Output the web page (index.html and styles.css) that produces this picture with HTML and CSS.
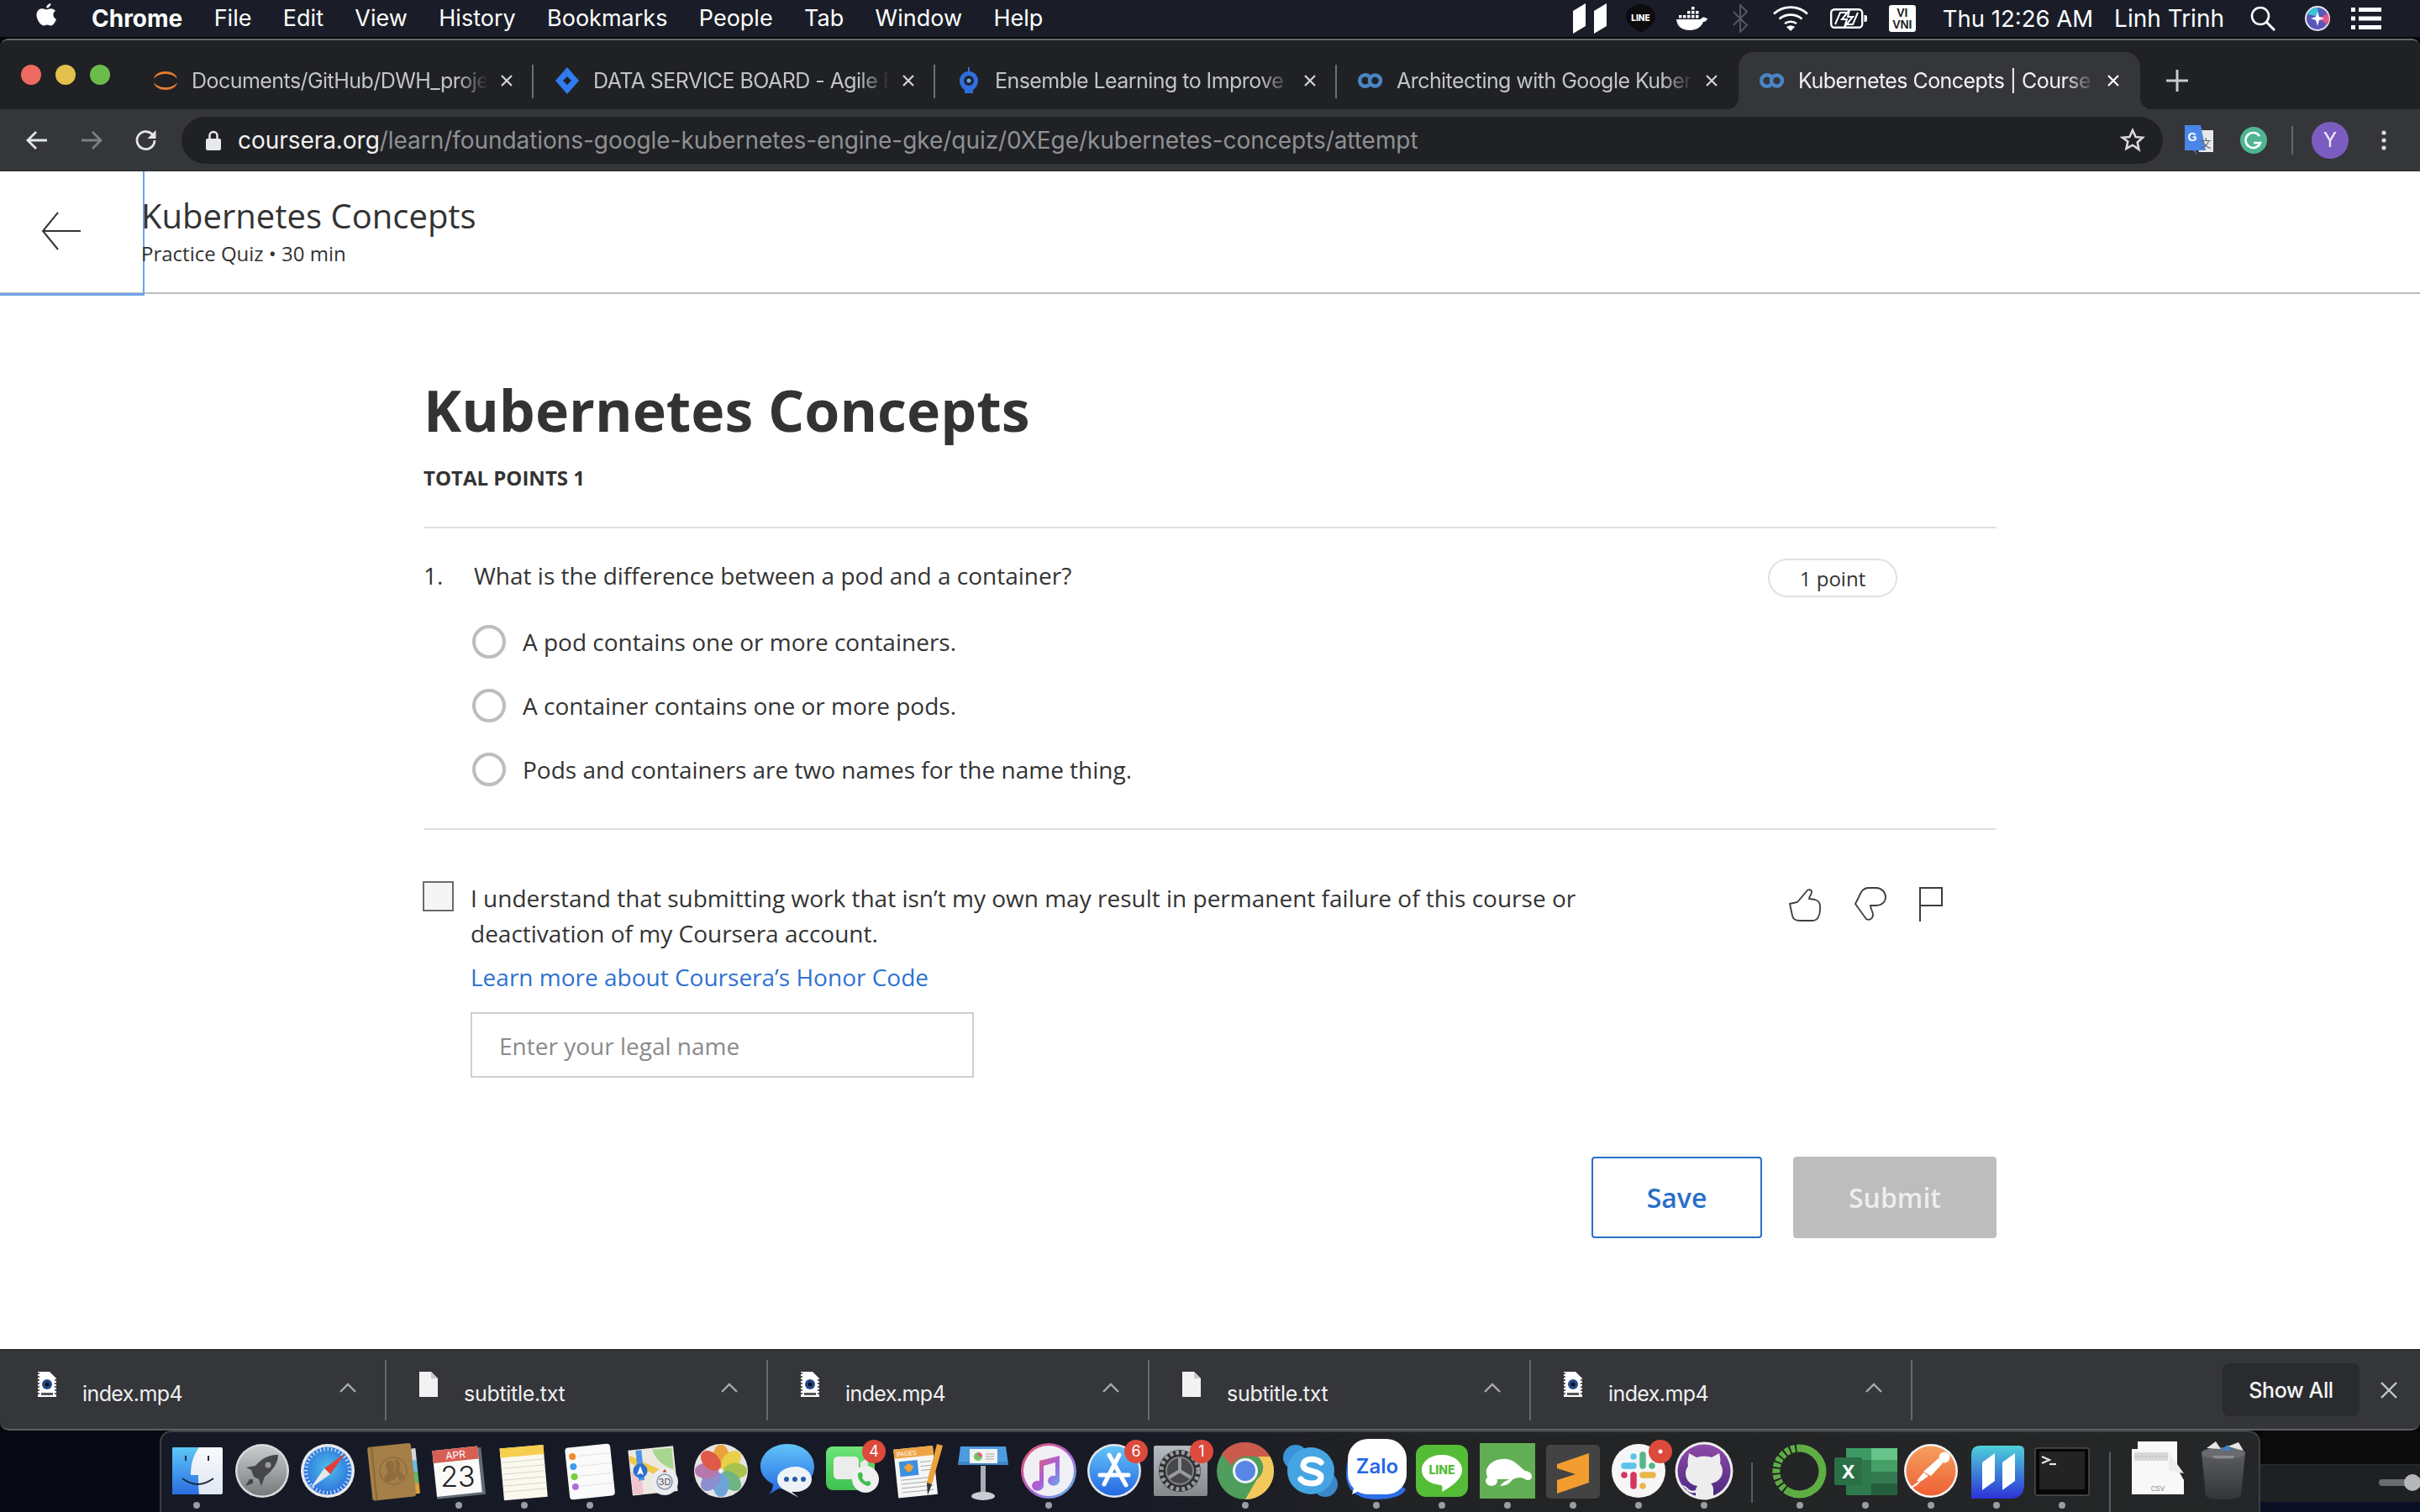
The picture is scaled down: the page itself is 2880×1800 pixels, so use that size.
FILE: index.html
```html
<!DOCTYPE html>
<html lang="en">
<head>
<meta charset="utf-8">
<title>Kubernetes Concepts | Coursera</title>
<link rel="stylesheet" href="styles.css">
</head>
<body>
<svg class="defs" width="0" height="0" aria-hidden="true">
  <defs>
    <linearGradient id="gFinder" x1="0" y1="0" x2="0" y2="1"><stop offset="0" stop-color="#5cc8f8"/><stop offset="1" stop-color="#2a6de0"/></linearGradient>
    <linearGradient id="gFinderR" x1="0" y1="0" x2="0" y2="1"><stop offset="0" stop-color="#f8f9fb"/><stop offset="1" stop-color="#dfe8f3"/></linearGradient>
    <linearGradient id="gGray" x1="0" y1="0" x2="0" y2="1"><stop offset="0" stop-color="#c9cbcd"/><stop offset="1" stop-color="#77797b"/></linearGradient>
    <radialGradient id="gSafari" cx="0.5" cy="0.45" r="0.6"><stop offset="0" stop-color="#4cc2ec"/><stop offset="1" stop-color="#2a66da"/></radialGradient>
    <linearGradient id="gBlue" x1="0" y1="0" x2="0" y2="1"><stop offset="0" stop-color="#62c4f9"/><stop offset="1" stop-color="#2467e4"/></linearGradient>
    <linearGradient id="gGreen" x1="0" y1="0" x2="0" y2="1"><stop offset="0" stop-color="#6ee47a"/><stop offset="1" stop-color="#3fc14f"/></linearGradient>
    <linearGradient id="gTunes" x1="0" y1="0" x2="1" y2="1"><stop offset="0" stop-color="#ef5a5a"/><stop offset="0.5" stop-color="#b65bd0"/><stop offset="1" stop-color="#4cc5f0"/></linearGradient>
    <linearGradient id="gNote" x1="0" y1="0" x2="1" y2="1"><stop offset="0" stop-color="#f05a6e"/><stop offset="0.55" stop-color="#a860d8"/><stop offset="1" stop-color="#59b8f2"/></linearGradient>
    <linearGradient id="gPost" x1="0" y1="0" x2="0" y2="1"><stop offset="0" stop-color="#f5a05e"/><stop offset="1" stop-color="#ee5f35"/></linearGradient>
    <linearGradient id="gPixel" x1="0" y1="0" x2="0" y2="1"><stop offset="0" stop-color="#4fd0d8"/><stop offset="1" stop-color="#2c33d8"/></linearGradient>
    <linearGradient id="gHub" x1="0" y1="0" x2="0" y2="1"><stop offset="0" stop-color="#8f4aa8"/><stop offset="1" stop-color="#4a2880"/></linearGradient>
    <linearGradient id="gTrash" x1="0" y1="0" x2="0" y2="1"><stop offset="0" stop-color="#5c5d60"/><stop offset="1" stop-color="#333436"/></linearGradient>
    <linearGradient id="gSys" x1="0" y1="0" x2="0" y2="1"><stop offset="0" stop-color="#b4bcc2"/><stop offset="1" stop-color="#85898c"/></linearGradient>
  </defs>
</svg>

<header class="menubar">
  <svg class="apple" viewBox="0 0 24 30"><path fill="#fff" d="M17 0c.2 2.400-2.300 5.800-5.200 5.600C11.500 3 14 .3 17 0zM12 7.400c1.300 0 2.900-1.200 5-1.200 1.500 0 4 .6 5.500 2.900-3.900 2.400-3.300 8 1 9.700-1 2.800-3.600 7.700-6.300 7.700-1.700 0-2.500-1.100-4.400-1.100-2 0-2.800 1.100-4.400 1.100C5 26.500 0 19.500 0 14.100 0 8.900 3.300 6.300 6.600 6.300c2.200 0 3.900 1.100 5.400 1.100z"/></svg>
  <nav class="menus">
    <span class="menu menu-app">Chrome</span>
    <span class="menu">File</span>
    <span class="menu">Edit</span>
    <span class="menu">View</span>
    <span class="menu">History</span>
    <span class="menu">Bookmarks</span>
    <span class="menu">People</span>
    <span class="menu">Tab</span>
    <span class="menu">Window</span>
    <span class="menu">Help</span>
  </nav>
  <div class="tray">
    <svg class="t-pixel" viewBox="0 0 40 36"><path fill="#fff" d="M0 9 15 0v27L0 36zM25 9 40 0v27l-15 9z"/></svg>
    <svg class="t-line" viewBox="0 0 35 36"><path fill="#0c0c0e" d="M17.500 1C27 1 35 8 35 16c0 8-9 15-17.500 19C12 30 0 27 0 16 0 8 8 1 17.500 1z"/><text class="tx-line" x="17.500" y="21" text-anchor="middle">LINE</text></svg>
    <svg class="t-docker" viewBox="0 0 37 30"><path fill="#fff" d="M0 16h29c1-2 3-3 5-2l3 1c-1 3-3 4-5 4-2 6-8 10-16 10C6 29 1 24 0 16z"/><path fill="#fff" d="M3 11h3.500v3.500H3zM8 11h3.500v3.500H8zM13 11h3.500v3.500H13zM18 11h3.500v3.500H18zM23 11h3.500v3.500H23zM13 6h3.500v3.500H13zM18 6h3.500v3.500H18zM23 6h3.500v3.500H23zM18 1h3.500v3.500H18z"/></svg>
    <svg class="t-bt" viewBox="0 0 18 34"><path fill="none" stroke="#53565e" stroke-width="2" d="M1 9 17 25 9 33V1l8 8L1 25"/></svg>
    <svg class="t-wifi" viewBox="0 0 42 30"><g fill="none" stroke="#fff" stroke-width="2.600"><path d="M1 9.500C12-1 30-1 41 9.500"/><path d="M7.500 15.500C15 9 27 9 34.500 15.500"/><path d="M14 21C18 18 24 18 28 21"/></g><path fill="#fff" d="M21 30l-5-5c3-2 7-2 10 0z"/></svg>
    <svg class="t-batt" viewBox="0 0 44 24"><rect x="1.200" y="1.200" width="37" height="21.600" rx="4" fill="none" stroke="#fff" stroke-width="2.400"/><path fill="#fff" d="M40.500 8h1.500q2 0 2 2v4q0 2-2 2h-1.500z"/><path fill="none" stroke="#fff" stroke-width="2" d="M6 19 12 5h8M33 5l-6 14h-8"/><path fill="none" stroke="#fff" stroke-width="2" d="M23 2 14 13h6l-3 9 10-12h-6z"/></svg>
    <div class="t-vni"><span>VI</span><span>VNI</span></div>
    <span class="tray-text t-time">Thu 12:26 AM</span>
    <span class="tray-text t-name">Linh Trinh</span>
    <svg class="t-search" viewBox="0 0 30 30"><circle cx="12" cy="12" r="10" fill="none" stroke="#fff" stroke-width="2.600"/><path stroke="#fff" stroke-width="3" d="M19 19l10 10"/></svg>
    <svg class="t-siri" viewBox="0 0 30 30"><circle cx="15" cy="15" r="15" fill="#e8e8ee"/><circle cx="15" cy="15" r="13" fill="#5a57b8"/><path fill="#3cc0d8" d="M3 10a13 13 0 0 1 12-8l2 11z"/><path fill="#e0568e" d="M27 9a13 13 0 0 1 0 13L16 15z"/><path fill="#fff" d="M15 7l2 6 6 2-6 2-2 7-2-7-6-2 6-2z"/></svg>
    <svg class="t-list" viewBox="0 0 36 26"><path fill="#fff" d="M0 0h5v5H0zM9 0h27v5H9zM0 10.500h5v5H0zM9 10.500h27v5H9zM0 21h5v5H0zM9 21h27v5H9z"/></svg>
  </div>
</header>

<div class="window">
  <div class="tabstrip">
    <div class="lights"><i class="light light-r"></i><i class="light light-y"></i><i class="light light-g"></i></div>
    <div class="tab">
      <svg class="fav" viewBox="0 0 32 32"><path fill="#e87b2c" d="M2 14C4 2 28 2 30 14 24 6 8 6 2 14zM2 18c2 12 26 12 28 0-6 8-22 8-28 0z"/></svg>
      <span class="tab-title">Documents/GitHub/DWH_proje</span>
      <svg class="tab-x" viewBox="0 0 14 14"><path stroke="#d5d6d8" stroke-width="2.200" d="M1 1l12 12M13 1 1 13"/></svg>
    </div>
    <div class="tab">
      <svg class="fav" viewBox="0 0 32 32"><path fill="#2f7cf0" d="M16 0 30 16 16 32 2 16zM16 11l-5 5 5 5 5-5z"/></svg>
      <span class="tab-title">DATA SERVICE BOARD - Agile B</span>
      <svg class="tab-x" viewBox="0 0 14 14"><path stroke="#d5d6d8" stroke-width="2.200" d="M1 1l12 12M13 1 1 13"/></svg>
    </div>
    <div class="tab">
      <svg class="fav" viewBox="0 0 32 32"><path fill="#2f6fe0" d="M15 0h2v6h-2zM16 5a11 11 0 0 1 11 11c0 5-3 9-6 11v4H11v-4C8 25 5 21 5 16A11 11 0 0 1 16 5z"/><circle cx="16" cy="16" r="6" fill="#20232a"/><circle cx="16" cy="16" r="2.500" fill="#6fa8f5"/></svg>
      <span class="tab-title">Ensemble Learning to Improve</span>
      <svg class="tab-x" viewBox="0 0 14 14"><path stroke="#d5d6d8" stroke-width="2.200" d="M1 1l12 12M13 1 1 13"/></svg>
    </div>
    <div class="tab">
      <svg class="fav" viewBox="0 0 32 32"><g fill="none" stroke="#4b84c4" stroke-width="4.500"><path d="M15 11.500A6.800 6.800 0 1 0 15 20.500"/><circle cx="21.500" cy="16" r="6.500"/></g></svg>
      <span class="tab-title">Architecting with Google Kuber</span>
      <svg class="tab-x" viewBox="0 0 14 14"><path stroke="#d5d6d8" stroke-width="2.200" d="M1 1l12 12M13 1 1 13"/></svg>
    </div>
    <div class="tab tab-active">
      <svg class="fav" viewBox="0 0 32 32"><g fill="none" stroke="#4b84c4" stroke-width="4.500"><path d="M15 11.500A6.800 6.800 0 1 0 15 20.500"/><circle cx="21.500" cy="16" r="6.500"/></g></svg>
      <span class="tab-title">Kubernetes Concepts | Course</span>
      <svg class="tab-x" viewBox="0 0 14 14"><path stroke="#ffffff" stroke-width="2.200" d="M1 1l12 12M13 1 1 13"/></svg>
    </div>
    <svg class="newtab" viewBox="0 0 26 26"><path fill="#c8cacd" d="M11.500 0h3v11.500H26v3H14.500V26h-3V14.500H0v-3h11.500z"/></svg>
  </div>

  <div class="toolbar">
    <button class="navbtn"><svg viewBox="0 0 28 28"><path fill="none" stroke="#e4e5e7" stroke-width="2.800" d="M26 14H3M13 4 3 14l10 10"/></svg></button>
    <button class="navbtn"><svg viewBox="0 0 28 28"><path fill="none" stroke="#7d7f83" stroke-width="2.800" d="M2 14h23M15 4l10 10-10 10"/></svg></button>
    <button class="navbtn"><svg viewBox="0 0 28 28"><path fill="none" stroke="#e4e5e7" stroke-width="2.800" d="M24 14a10.500 10.500 0 1 1-3.200-7.500L24 9.500"/><path fill="#e4e5e7" d="M25.500 2v10h-10z"/></svg></button>
    <div class="omnibox">
      <svg class="lock" viewBox="0 0 18 24"><path fill="none" stroke="#e8e9ea" stroke-width="2.500" d="M4.500 11V6.500a4.500 4.500 0 0 1 9 0V11"/><rect y="10" width="18" height="14" rx="2" fill="#e8e9ea"/></svg>
      <span class="url"><b class="url-host">coursera.org</b>/learn/foundations-google-kubernetes-engine-gke/quiz/0XEge/kubernetes-concepts/attempt</span>
      <svg class="star" viewBox="0 0 30 30"><path fill="none" stroke="#d8d9db" stroke-width="2.600" d="M15 3l3.600 8 8.400.8-6.300 5.700 1.800 8.500L15 20.700 7.500 25l1.800-8.500L3 11.800l8.400-.8z"/></svg>
    </div>
    <svg class="ext ext-tr" viewBox="0 0 34 36"><path fill="#e8e8e8" d="M12 6h22v26H17z"/><path fill="#4a86e8" d="M0 0h19l6 30H12l4 6-6-6H0z"/><text class="tx-g" x="9" y="19" text-anchor="middle">G</text><text class="tx-zh" x="25" y="26" text-anchor="middle">文</text></svg>
    <svg class="ext ext-g" viewBox="0 0 32 32"><circle cx="16" cy="16" r="16" fill="#4eb592"/><path fill="none" stroke="#fff" stroke-width="2.600" d="M23 11a9 9 0 1 0 1 8h-8"/></svg>
    <i class="tb-sep"></i>
    <span class="avatar">Y</span>
    <svg class="kebab" viewBox="0 0 6 24"><circle cx="3" cy="3" r="2.600" fill="#d8d9db"/><circle cx="3" cy="12" r="2.600" fill="#d8d9db"/><circle cx="3" cy="21" r="2.600" fill="#d8d9db"/></svg>
  </div>

  <div class="page">
    <div class="page-head">
      <a class="back"><svg viewBox="0 0 50 50"><path fill="none" stroke="#333" stroke-width="2" d="M48 25H3M21 3 3 25l18 22"/></svg></a>
      <div class="head-text">
        <div class="head-title">Kubernetes Concepts</div>
        <div class="head-sub">Practice Quiz • 30 min</div>
      </div>
    </div>
    <main class="quiz">
      <h1 class="quiz-title">Kubernetes Concepts</h1>
      <div class="total">TOTAL POINTS 1</div>
      <hr class="rule rule-a">
      <div class="question">
        <span class="qnum">1.</span>
        <span class="qtext">What is the difference between a pod and a container?</span>
        <span class="pill">1 point</span>
      </div>
      <div class="options">
        <label class="option"><i class="radio"></i><span>A pod contains one or more containers.</span></label>
        <label class="option"><i class="radio"></i><span>A container contains one or more pods.</span></label>
        <label class="option"><i class="radio"></i><span>Pods and containers are two names for the name thing.</span></label>
      </div>
      <hr class="rule rule-b">
      <div class="honor">
        <i class="check"></i>
        <div class="honor-body">
          <p class="honor-text">I understand that submitting work that isn’t my own may result in permanent failure of this course or deactivation of my Coursera account.</p>
          <a class="honor-link">Learn more about Coursera’s Honor Code</a>
          <div class="name-input">Enter your legal name</div>
        </div>
        <div class="feedback">
          <svg class="fb fb-up" viewBox="0 0 38 41"><path fill="none" stroke="#3a3d42" stroke-width="1.800" d="M1 20l9-2L21 5c2-3 6-2 6 1 0 3-3 5-3 8l7 1c4 1 6 4 6 8v4c0 7-3 13-9 13H13c-5 0-8-1-9-6z"/></svg>
          <svg class="fb fb-down" viewBox="0 0 38 41"><path fill="none" stroke="#3a3d42" stroke-width="1.800" d="M1 20 8 6c2-3 5-5 9-5h9c6 0 11 5 11 11s-5 10-11 10h-7c0 4 3 7 3 11 0 5-5 7-8 5l-3-4z"/></svg>
          <svg class="fb fb-flag" viewBox="0 0 28 41"><path fill="none" stroke="#3a3d42" stroke-width="2" d="M1 41V1h26v21H1"/></svg>
        </div>
      </div>
      <div class="actions">
        <button class="btn btn-save">Save</button>
        <button class="btn btn-submit">Submit</button>
      </div>
    </main>
  </div>

  <div class="shelf">
    <div class="dl">
      <svg class="dl-ico" viewBox="0 0 22 30"><path fill="#fff" d="M0 0h14l8 8v22H0z"/><path fill="none" stroke="#222" stroke-width="1.500" stroke-dasharray="2 2" d="M1 1v28M21 9v20"/><circle cx="11" cy="15" r="6" fill="#234a8a"/><circle cx="11" cy="15" r="2.500" fill="#111"/><rect x="4" y="25" width="14" height="3" fill="#555"/></svg>
      <span class="dl-name">index.mp4</span>
      <svg class="dl-chev" viewBox="0 0 20 12"><path fill="none" stroke="#a8a9ab" stroke-width="2.400" d="M1 11 10 2l9 9"/></svg>
    </div>
    <div class="dl">
      <svg class="dl-ico" viewBox="0 0 22 30"><path fill="#f2f2f2" d="M0 0h14l8 8v22H0z"/><path fill="#c9c9c9" d="M14 0l8 8h-8z"/></svg>
      <span class="dl-name dl-name-txt">subtitle.txt</span>
      <svg class="dl-chev" viewBox="0 0 20 12"><path fill="none" stroke="#a8a9ab" stroke-width="2.400" d="M1 11 10 2l9 9"/></svg>
    </div>
    <div class="dl">
      <svg class="dl-ico" viewBox="0 0 22 30"><path fill="#fff" d="M0 0h14l8 8v22H0z"/><path fill="none" stroke="#222" stroke-width="1.500" stroke-dasharray="2 2" d="M1 1v28M21 9v20"/><circle cx="11" cy="15" r="6" fill="#234a8a"/><circle cx="11" cy="15" r="2.500" fill="#111"/><rect x="4" y="25" width="14" height="3" fill="#555"/></svg>
      <span class="dl-name">index.mp4</span>
      <svg class="dl-chev" viewBox="0 0 20 12"><path fill="none" stroke="#a8a9ab" stroke-width="2.400" d="M1 11 10 2l9 9"/></svg>
    </div>
    <div class="dl">
      <svg class="dl-ico" viewBox="0 0 22 30"><path fill="#f2f2f2" d="M0 0h14l8 8v22H0z"/><path fill="#c9c9c9" d="M14 0l8 8h-8z"/></svg>
      <span class="dl-name dl-name-txt">subtitle.txt</span>
      <svg class="dl-chev" viewBox="0 0 20 12"><path fill="none" stroke="#a8a9ab" stroke-width="2.400" d="M1 11 10 2l9 9"/></svg>
    </div>
    <div class="dl">
      <svg class="dl-ico" viewBox="0 0 22 30"><path fill="#fff" d="M0 0h14l8 8v22H0z"/><path fill="none" stroke="#222" stroke-width="1.500" stroke-dasharray="2 2" d="M1 1v28M21 9v20"/><circle cx="11" cy="15" r="6" fill="#234a8a"/><circle cx="11" cy="15" r="2.500" fill="#111"/><rect x="4" y="25" width="14" height="3" fill="#555"/></svg>
      <span class="dl-name">index.mp4</span>
      <svg class="dl-chev" viewBox="0 0 20 12"><path fill="none" stroke="#a8a9ab" stroke-width="2.400" d="M1 11 10 2l9 9"/></svg>
    </div>
    <button class="showall">Show All</button>
    <svg class="shelf-x" viewBox="0 0 20 20"><path stroke="#c8c9cb" stroke-width="2.400" d="M1 1l18 18M19 1 1 19"/></svg>
  </div>
</div>

<div class="desktop">
  <div class="wall"></div>
  <div class="dock">
    <div class="di"><svg viewBox="0 0 78 84"><rect x="10" y="18" width="60" height="56" rx="2" fill="url(#gFinderR)"/><path fill="url(#gFinder)" d="M12 18h30c-6 8-10 18-10 33h9c0 8 0 15 1 23H12q-2 0-2-2V20q0-2 2-2z"/><path stroke="#1e2a40" stroke-width="2" d="M26 28v6M53 28v6"/><path fill="none" stroke="#1e2a40" stroke-width="2" d="M22 55q18 14 37 0"/></svg><i class="dot"></i></div>
    <div class="di"><svg viewBox="0 0 78 84"><circle cx="39" cy="46" r="32" fill="#d8dadc"/><circle cx="39" cy="46" r="29.500" fill="url(#gGray)"/><path fill="#45464a" d="M58 27c-10-1-21 5-27 13l-11 2 6 3 3 8 6 3 3 8 4-11c9-7 16-16 16-26zM28 56l-4 0-5 8 9-3z"/><circle cx="46" cy="39" r="3.500" fill="#9a9c9e"/></svg></div>
    <div class="di"><svg viewBox="0 0 78 84"><circle cx="39" cy="46" r="32" fill="#e8eaec"/><circle cx="39" cy="46" r="28.500" fill="url(#gSafari)"/><circle cx="39" cy="46" r="26" fill="none" stroke="#e6f2fc" stroke-width="4" stroke-dasharray="1.200 3.300"/><path fill="#e43f37" d="M60 25 35 43l7 7z"/><path fill="#e8e8e8" d="M18 67l24-17-7-7z"/></svg></div>
    <div class="di"><svg viewBox="0 0 78 84"><g transform="rotate(-6 39 46)"><rect x="62" y="22" width="6" height="16" fill="#d8d8d8"/><rect x="62" y="36" width="6" height="14" fill="#6cbde8"/><rect x="62" y="50" width="6" height="13" fill="#65b868"/><rect x="62" y="63" width="6" height="13" fill="#e0a03c"/><rect x="11" y="15" width="52" height="64" rx="3" fill="#a57f48"/><rect x="15" y="15" width="2" height="64" fill="#8a683a"/><circle cx="39" cy="46" r="16" fill="none" stroke="#8f6d3e" stroke-width="1.500"/><path fill="#8f6d3e" d="M27 58c0-8 4-9 6-11-4-6-2-14 3-14s7 8 3 14c2 2 4 3 5 5-3 4-10 7-17 6zM42 33c5-1 8 7 4 14 2 2 5 3 5 8-2 2-4 3-6 3-1-5-2-8-5-11 3-5 3-10 2-14z"/></g></svg></div>
    <div class="di"><svg viewBox="0 0 78 84"><g transform="rotate(-6 39 46)"><rect x="10" y="21" width="58" height="56" fill="#626c75"/><rect x="10" y="19" width="54" height="55" fill="#fafafa"/><rect x="10" y="19" width="54" height="15" fill="#d85f56"/><text class="tx-apr" x="37" y="31" text-anchor="middle">APR</text></g><text class="tx-23" x="38" y="65" text-anchor="middle">23</text></svg><i class="dot"></i></div>
    <div class="di"><svg viewBox="0 0 78 84"><g transform="rotate(-5 39 46)"><rect x="12" y="17" width="52" height="62" fill="#fbf8ee"/><rect x="12" y="17" width="52" height="11" fill="#f6cf4e"/><path stroke="#d7d5cd" stroke-width="1" d="M12 34h52M12 41h52M12 48h52M12 55h52M12 62h52M12 69h52"/></g></svg><i class="dot"></i></div>
    <div class="di"><svg viewBox="0 0 78 84"><g transform="rotate(-6 39 46)"><rect x="12" y="16" width="54" height="62" rx="4" fill="#fafafa"/><path stroke="#e2e2e2" stroke-width="1" d="M26 27h40M26 39h40M26 51h40M26 63h40"/><circle cx="20" cy="27" r="4" fill="#f08a2c"/><circle cx="20" cy="39" r="4" fill="#3d9cf0"/><circle cx="20" cy="51" r="4" fill="#76cd3c"/><circle cx="20" cy="63" r="4" fill="#b36cdc"/></g></svg><i class="dot"></i></div>
    <div class="di"><svg viewBox="0 0 78 84"><g transform="rotate(-6 35 46)"><rect x="9" y="19" width="54" height="54" fill="#eee9e0"/><path fill="#a8d690" d="M38 21h23v26C52 44 40 34 38 21z"/><path fill="#f0c84a" d="M10 34l44 26v-9L10 25z"/><path fill="#f2c4d0" d="M10 45h12v27H10z"/><path fill="#4e92e8" d="M18 20h7v36h-7z"/></g><circle cx="21" cy="46" r="8.500" fill="#2a70d0"/><path fill="#fff" d="M21 40l4 11-4-2-4 2z"/><circle cx="50" cy="59" r="16" fill="#e9edf0"/><circle cx="50" cy="59" r="9" fill="none" stroke="#8a96a8" stroke-width="1.500"/><text class="tx-3d" x="50" y="63" text-anchor="middle">3D</text><path fill="#d8352a" d="M50 44l2.500 3.500h-5z"/></svg></div>
    <div class="di"><svg viewBox="0 0 78 84"><circle cx="39" cy="46" r="32" fill="#e4e4e2"/><g class="petals"><ellipse cx="39" cy="29" rx="9.500" ry="14" fill="#eba33a"/><ellipse cx="39" cy="29" rx="9.500" ry="14" fill="#e9d04a" transform="rotate(45 39 46)"/><ellipse cx="39" cy="29" rx="9.500" ry="14" fill="#a9c34e" transform="rotate(90 39 46)"/><ellipse cx="39" cy="29" rx="9.500" ry="14" fill="#6eb583" transform="rotate(135 39 46)"/><ellipse cx="39" cy="29" rx="9.500" ry="14" fill="#6ca6d8" transform="rotate(180 39 46)"/><ellipse cx="39" cy="29" rx="9.500" ry="14" fill="#8a8fd0" transform="rotate(225 39 46)"/><ellipse cx="39" cy="29" rx="9.500" ry="14" fill="#b678ae" transform="rotate(270 39 46)"/><ellipse cx="39" cy="29" rx="9.500" ry="14" fill="#df5a48" transform="rotate(315 39 46)"/></g><circle cx="39" cy="46" r="1.500" fill="#fff"/></svg></div>
    <div class="di"><svg viewBox="0 0 78 84"><path fill="url(#gBlue)" d="M40 14c17 0 32 11 32 27s-15 27-32 27c-3 0-7 0-10-1l-12 7c3-3 5-8 5-12C14 57 8 50 8 41c0-16 15-27 32-27z"/><path fill="#eef3f8" d="M50 41c11 0 19 7 19 15s-8 15-19 15c-2 0-4 0-5 0l9 7-15-8c-7-3-11-8-11-14 0-8 9-15 22-15z"/><circle cx="39" cy="56" r="3" fill="#2a5ca8"/><circle cx="49" cy="56" r="3" fill="#2a5ca8"/><circle cx="59" cy="56" r="3" fill="#2a5ca8"/></svg></div>
    <div class="di"><svg viewBox="0 0 78 84"><rect x="8" y="17" width="58" height="52" rx="8" fill="url(#gGreen)"/><rect x="17" y="29" width="30" height="27" rx="5" fill="#ececec"/><path fill="#e8e8e8" d="M49 36l9-6v26l-9-6z"/><circle cx="55" cy="56" r="16" fill="#f0f0f0"/><path fill="#3fbf50" d="M48 48c2-1 3 0 4 3 0 2-1 2-1 3 1 2 2 4 5 5 1 0 1-1 3-1 2 1 3 3 2 4-2 3-5 2-8 0-4-2-8-8-7-12 0-1 1-2 2-2z"/><circle cx="65" cy="23" r="14" fill="#dc4a3b"/><text class="tx-badge" x="65" y="29" text-anchor="middle">4</text></svg></div>
    <div class="di"><svg viewBox="0 0 78 84"><g transform="rotate(-6 39 46)"><rect x="13" y="18" width="47" height="58" fill="#f6f6f6"/><rect x="13" y="18" width="47" height="11" fill="#eda445"/><text class="tx-pages" x="16" y="27">PAGES</text><rect x="18" y="33" width="22" height="18" fill="#3b8fe0"/><path fill="#eea23a" d="M29 36l6 4-4 6h-4l-4-6z"/><path stroke="#a8a8a8" stroke-width="1" d="M43 36h13M43 41h13M43 46h13M18 55h38M18 60h38M18 65h38M18 70h38"/></g><path fill="#eea23a" d="M62 14l7 2-13 46-6-2z"/><path fill="#333" d="M50 60l6 2-5 13z"/></svg></div>
    <div class="di"><svg viewBox="0 0 78 84"><rect x="36" y="40" width="6" height="34" fill="#a8aeb4"/><ellipse cx="39" cy="76" rx="14" ry="5" fill="#c8ced4"/><path fill="#4e9ce0" d="M12 17h54l3 22H9z"/><rect x="10" y="35" width="58" height="4" fill="#3f86cc"/><rect x="23" y="20" width="33" height="17" fill="#f2f2f2"/><circle cx="33" cy="29" r="5" fill="#74c06e"/><path fill="#e05a8a" d="M33 29v-5a5 5 0 0 1 5 5z"/><path stroke="#a8a8a8" stroke-width="1" d="M42 26h10M42 29h10M42 32h10"/></svg></div>
    <div class="di"><svg viewBox="0 0 78 84"><circle cx="39" cy="46" r="33" fill="url(#gTunes)"/><circle cx="39" cy="46" r="30" fill="#f0f0f4"/><path fill="url(#gNote)" d="M28 34l24-6v30a7 6 0 1 1-5-6V36l-14 4v24a7 6 0 1 1-5-6z"/></svg><i class="dot"></i></div>
    <div class="di"><svg viewBox="0 0 78 84"><circle cx="39" cy="46" r="32" fill="#e4e6e8"/><circle cx="39" cy="46" r="29.500" fill="url(#gBlue)"/><g stroke="#fff" stroke-width="5" stroke-linecap="round" fill="none"><path d="M33 27l20 36M45 27 27 62M22 51h34"/></g><circle cx="65" cy="23" r="14" fill="#dc4a3b"/><text class="tx-badge" x="65" y="29" text-anchor="middle">6</text></svg></div>
    <div class="di"><svg viewBox="0 0 78 84"><rect x="8" y="16" width="64" height="60" rx="2" fill="url(#gSys)"/><circle cx="39" cy="46" r="25" fill="#2f3033"/><circle cx="39" cy="46" r="22" fill="none" stroke="#9a9b9d" stroke-width="5" stroke-dasharray="4 3"/><circle cx="39" cy="46" r="16" fill="#47484b" stroke="#7f8082" stroke-width="2"/><g stroke="#9a9b9d" stroke-width="4"><path d="M39 46V31M39 46l13 8M39 46l-13 8"/></g><circle cx="65" cy="23" r="14" fill="#dc4a3b"/><text class="tx-badge" x="65" y="29" text-anchor="middle">1</text></svg></div>
    <div class="di"><svg viewBox="0 0 78 84"><circle cx="39" cy="46" r="34" fill="#4f9e5e"/><path fill="#cb5a4c" d="M39 12a34 34 0 0 1 29.500 17H39a17 17 0 0 0-16 11L11 26a34 34 0 0 1 28-14z"/><path fill="#f3c95c" d="M68.500 29A34 34 0 0 1 39 80l14-24a17 17 0 0 0 1-27z"/><circle cx="39" cy="46" r="15" fill="#f2f2f2"/><circle cx="39" cy="46" r="12" fill="#5886e4"/></svg><i class="dot"></i></div>
    <div class="di"><svg viewBox="0 0 78 84"><circle cx="21" cy="30" r="15" fill="#3a93d8"/><circle cx="56" cy="62" r="15" fill="#3a88c8"/><circle cx="39" cy="46" r="28" fill="#45a5e2"/><path fill="none" stroke="#fff" stroke-width="7" stroke-linecap="round" d="M51 36c-3-4-20-7-21 3-1 9 22 6 21 15-1 10-19 8-24 2"/></svg></div>
    <div class="di"><svg viewBox="0 0 78 84"><path fill="#2c6ce6" d="M16 20Q3 24 3 50c0 18 12 30 36 30 20 0 32-5 35-12z"/><rect x="5" y="8" width="70" height="66" rx="24" fill="#fff"/><path fill="#fff" d="M14 60l-4 14 14-7z"/><text class="tx-zalo" x="40" y="49" text-anchor="middle">Zalo</text></svg><i class="dot"></i></div>
    <div class="di"><svg viewBox="0 0 78 84"><rect x="8" y="15" width="62" height="62" rx="12" fill="#55bc36"/><path fill="#fff" d="M39 27c14 0 24 8 24 18 0 12-15 21-24 26 1-4 1-7-1-8C25 62 15 55 15 45c0-10 10-18 24-18z"/><text class="tx-linei" x="39" y="50" text-anchor="middle">LINE</text></svg><i class="dot"></i></div>
    <div class="di"><svg viewBox="0 0 78 84"><rect x="6" y="13" width="66" height="66" fill="#62ae54"/><path fill="#fff" d="M14 45c3-10 14-14 24-13 10 1 16 10 22 14 4 0 8 3 8 7s-5 5-8 3c-5-3-10-2-14 0H18c-3 0-5-8-4-11z"/><ellipse cx="20" cy="58" rx="7" ry="6" fill="#fff"/><path fill="#fff" d="M30 64c5-6 10-8 16-9-3 5-8 9-16 9z"/></svg><i class="dot"></i></div>
    <div class="di"><svg viewBox="0 0 78 84"><rect x="7" y="15" width="64" height="64" rx="5" fill="#434343"/><path fill="#f39c30" d="M58 25v20L20 57l38-12v15L20 73V57l22-7-22-7V38z"/></svg><i class="dot"></i></div>
    <div class="di"><svg viewBox="0 0 78 84"><circle cx="39" cy="46" r="32" fill="#f6f6f6"/><g stroke-width="7.500" stroke-linecap="round"><path stroke="#5cc3ee" d="M22 40h11"/><path stroke="#5cc3ee" d="M33 29v0"/><path stroke="#56b68a" d="M44 27v13"/><path stroke="#56b68a" d="M55 40v0"/><path stroke="#e9b84a" d="M44 51h12"/><path stroke="#e9b84a" d="M44 64v0"/><path stroke="#d4375c" d="M33 51v13"/><path stroke="#d4375c" d="M22 51v0"/></g><circle cx="65" cy="23" r="14" fill="#dc4a3b"/><circle cx="65" cy="23" r="2.500" fill="#fff"/></svg><i class="dot"></i></div>
    <div class="di"><svg viewBox="0 0 78 84"><circle cx="39" cy="46" r="34.500" fill="#ededed"/><circle cx="39" cy="46" r="31.500" fill="url(#gHub)"/><path fill="#ededed" d="M21 25l9 5c6-2 12-2 18 0l9-5c1 4 2 8 1 12 2 3 3 6 3 9 0 9-7 14-14 15 2 2 3 4 3 7v10H29v-6c-5 1-10-1-12-5l-5-4c4 0 7 3 9 5 2 2 5 2 8 1 0-2 1-3 2-5-7-1-14-6-14-15 0-3 1-6 3-9-1-4 0-8 1-15z"/></svg><i class="dot"></i></div>
    <i class="dock-sep"></i>
    <div class="di"><svg viewBox="0 0 78 84"><path fill="none" stroke="#5fae44" stroke-width="9" d="M40 19a27.500 27.500 0 1 1-14 52"/><path fill="none" stroke="#5fae44" stroke-width="9" stroke-dasharray="5 2" d="M26 71A27.500 27.500 0 0 1 40 19"/></svg><i class="dot"></i></div>
    <div class="di"><svg viewBox="0 0 78 84"><rect x="16" y="19" width="61" height="56" rx="2" fill="#2f7a4c"/><rect x="46" y="19" width="31" height="14" fill="#65c58a"/><rect x="46" y="33" width="31" height="14" fill="#45a067"/><rect x="46" y="47" width="31" height="14" fill="#357a50"/><rect x="46" y="61" width="31" height="14" fill="#265f3d"/><rect x="16" y="19" width="30" height="14" fill="#3e9a64"/><rect x="2" y="30" width="33" height="33" rx="2" fill="#2a6f45"/><text class="tx-x" x="18.500" y="55" text-anchor="middle">X</text></svg><i class="dot"></i></div>
    <div class="di"><svg viewBox="0 0 78 84"><circle cx="39" cy="46" r="32" fill="#f4f4f4"/><circle cx="39" cy="46" r="29.500" fill="url(#gPost)"/><g fill="#fff"><circle cx="55" cy="30" r="6.500"/><path d="M48 31l5 6-14 15-9-5z"/><path d="M30 48l6 4-8 6-6 0z"/><path d="M27 58c-4 5-8 8-14 9l16-12z"/></g></svg><i class="dot"></i></div>
    <div class="di"><svg viewBox="0 0 78 84"><path fill="url(#gPixel)" d="M20 16h46q6 0 6 6v40q0 17-17 17H9V27q0-11 11-11z"/><path fill="#fff" d="M22 36l15-11v33l-15 11zM46 36l15-11v33l-15 11z"/></svg><i class="dot"></i></div>
    <div class="di"><svg viewBox="0 0 78 84"><rect x="7" y="19" width="64" height="56" rx="2" fill="#060606" stroke="#6a6a6a" stroke-width="1"/><rect x="12" y="23" width="54" height="45" fill="#232323"/><path fill="none" stroke="#e6e6e6" stroke-width="2.200" d="M15 29l9 4-9 4"/><path stroke="#e6e6e6" stroke-width="2.200" d="M24 38h8"/></svg><i class="dot"></i></div>
    <i class="dock-sep dock-sep-b"></i>
    <div class="di"><svg viewBox="0 0 78 84"><path fill="#f8f8f8" d="M15 11h47v32l8 14v17H8V20h7z"/><path fill="#d8d8d8" d="M11 24h40v10H11z"/><path stroke="#c4c4c4" stroke-width="2" stroke-dasharray="2 2" d="M12 29h38"/><path fill="#ececec" d="M52 24l18 25-18-3z"/><text class="tx-csv" x="39" y="70" text-anchor="middle">CSV</text></svg></div>
    <div class="di"><svg viewBox="0 0 78 84"><path fill="url(#gTrash)" d="M13 25h52l-5 50q-1 5-21 5t-21-5z"/><ellipse cx="39" cy="25" rx="26" ry="7" fill="#6a6b6e"/><path fill="#e6e6e6" d="M19 19l11-8 6 9zM44 17l13-5 6 10z"/><path fill="#3e7fd0" d="M36 21l8-6 5 7z"/><path fill="#8b8d90" d="M26 28h26l-1 3H28z"/></svg></div>
  </div>
  <div class="side">
    <div class="side-top"></div>
    <div class="side-panel"><i class="slider"><b></b></i></div>
    <div class="side-wall"></div>
  </div>
</div>
</body>
</html>
```

FILE: styles.css
```css
* { box-sizing: border-box; }
html, body { margin: 0; padding: 0; }
body {
  width: 2880px;
  height: 1800px;
  overflow: hidden;
  background: #05070d;
  display: flex;
  flex-direction: column;
  font-family: "Open Sans", "Liberation Sans", sans-serif;
}
.defs { position: absolute; }
p, h1 { margin: 0; }
button { font: inherit; border: 0; background: none; padding: 0; }
svg { display: block; flex: none; }

/* menu bar */
.menubar {
  height: 44px;
  flex: none;
  background: #1a1d28;
  color: #fff;
  display: flex;
  align-items: center;
  padding: 0 46px 0 43px;
  font-family: Inter, "Liberation Sans", sans-serif;
}
.apple { width: 25px; height: 30px; margin-top: -6px; }
.menus { display: flex; gap: 37.400px; margin-left: 41px; font-size: 27px; }
.menu-app { font-weight: 700; font-size: 28px; }
.tray { margin-left: auto; display: flex; align-items: center; }
.t-pixel { width: 40px; height: 36px; }
.t-line { width: 35px; height: 36px; margin-left: 23px; }
.t-docker { width: 37px; height: 30px; margin-left: 25px; }
.t-bt { width: 18px; height: 34px; margin-left: 30px; }
.t-wifi { width: 42px; height: 30px; margin-left: 30px; }
.t-batt { width: 44px; height: 24px; margin-left: 26px; }
.t-vni {
  width: 32px; height: 32px; margin-left: 26px; background: #fff; border-radius: 3px;
  color: #1a1d28; font: 700 14px/14px "Liberation Sans", sans-serif;
  display: flex; flex-direction: column; align-items: center; justify-content: center;
}
.tray-text { font-size: 28px; white-space: nowrap; }
.t-time { margin-left: 32px; font-size: 27.500px; }
.t-name { margin-left: 25px; }
.t-search { width: 30px; height: 30px; margin-left: 31px; }
.t-siri { width: 30px; height: 30px; margin-left: 35px; }
.t-list { width: 36px; height: 26px; margin-left: 25px; }
.tx-line { font: 800 10px Inter, sans-serif; fill: #fff; }

/* window */
.window {
  margin-top: 2px;
  height: 1657px;
  flex: none;
  display: flex;
  flex-direction: column;
  background: #202124;
  border-top: 2px solid #67686b;
  border-radius: 10px;
  overflow: hidden;
  position: relative;
}
.tabstrip { height: 82px; flex: none; display: flex; align-items: flex-end; background: #202124; }
.lights { width: 157px; height: 68px; display: flex; gap: 17px; padding: 15px 0 0 25px; }
.light { width: 24px; height: 24px; border-radius: 50%; }
.light-r { background: #ee6a5f; }
.light-y { background: #e3c04c; }
.light-g { background: #6cbc4c; }
.tab {
  width: 478px;
  height: 68px;
  display: flex;
  align-items: center;
  padding: 0 25px 0 24px;
  position: relative;
  color: #c2c4c8;
  font: 400 25px Inter, "Liberation Sans", sans-serif;
  letter-spacing: -.55px;
}
.tab::after {
  content: "";
  position: absolute;
  right: 0;
  top: 15px;
  width: 2px;
  height: 40px;
  background: #6f7074;
}
.tab:nth-child(5)::after { display: none; }
.fav { width: 32px; height: 32px; }
.tab-title {
  margin: 0 8px 0 15px;
  flex: 1;
  min-width: 0;
  overflow: hidden;
  white-space: nowrap;
  -webkit-mask-image: linear-gradient(to right, #000 88%, transparent 98%);
  mask-image: linear-gradient(to right, #000 88%, transparent 98%);
}
.tab-x { width: 14px; height: 16px; }
.tab-active { background: #35363a; color: #f2f2f3; border-radius: 18px 18px 0 0; }
.tab-active::before, .tab-active::after {
  content: "";
  display: block;
  position: absolute;
  top: auto;
  bottom: 0;
  width: 14px;
  height: 14px;
  background: radial-gradient(circle at 0 0, transparent 14px, #35363a 14.500px);
}
.tab-active::before { left: -14px; }
.tab-active::after { right: -14px; background: radial-gradient(circle at 100% 0, transparent 14px, #35363a 14.500px); }
.newtab { width: 26px; height: 26px; margin: 0 0 21px 31px; }

.toolbar {
  height: 74px;
  flex: none;
  background: #35363a;
  display: flex;
  align-items: center;
  padding-left: 11px;
  border-bottom: 1px solid #2b2c2f;
}
.navbtn { width: 65px; height: 56px; display: flex; align-items: center; justify-content: center; }
.navbtn svg { width: 28px; height: 28px; }
.omnibox {
  margin-left: 10px;
  width: 2358px;
  height: 56px;
  border-radius: 28px;
  background: #202124;
  display: flex;
  align-items: center;
  padding: 0 21px 0 29px;
}
.lock { width: 18px; height: 24px; }
.url {
  margin-left: 20px;
  color: #8f9195;
  font: 400 28px Inter, "Liberation Sans", sans-serif;
  letter-spacing: -.05px;
  white-space: nowrap;
}
.url-host { color: #f1f2f3; font-weight: 400; }
.star { width: 30px; height: 30px; margin-left: auto; }
.ext-tr { width: 34px; height: 36px; margin-left: 26px; }
.ext-g { width: 32px; height: 32px; margin-left: 32px; }
.tx-g { font: 700 14px "Liberation Sans", sans-serif; fill: #fff; }
.tx-zh { font: 400 13px "Noto Sans CJK SC", sans-serif; fill: #666; }
.tb-sep { width: 2px; height: 34px; background: #66676b; margin-left: 29px; }
.avatar {
  width: 44px; height: 44px; margin-left: 22px; border-radius: 50%;
  background: #7b5cc0; color: #f0eaf8;
  display: flex; align-items: center; justify-content: center;
  font: 400 24px Inter, sans-serif;
}
.kebab { width: 6px; height: 24px; margin-left: 39px; }

/* page */
.page { flex: 1; min-height: 0; background: #fff; color: #333; }
.page-head {
  height: 146px;
  border-bottom: 2px solid #bdbdbd;
  display: flex;
  position: relative;
}
.back {
  width: 172px;
  height: 148px;
  flex: none;
  border-right: 2px solid #6fa3e8;
  border-bottom: 3px solid #6fa3e8;
  display: flex;
  align-items: center;
  justify-content: center;
  padding: 0 24px 4px 0;
}
.back svg { width: 50px; height: 50px; }
.head-text { margin-left: -4px; padding-top: 26px; }
.head-title { font-size: 40px; line-height: 54px; }
.head-sub { font-size: 24px; line-height: 32px; margin-top: 2px; }

.quiz { width: 1872px; margin-left: 504px; padding-top: 93px; font-size: 28px; }
.quiz-title { font-size: 68px; line-height: 90px; font-weight: 700; }
.total { font-size: 24px; line-height: 30px; font-weight: 700; margin-top: 21px; }
.rule { border: 0; height: 2px; background: #e1e1e1; margin: 0; }
.rule-a { margin-top: 43px; }
.question { display: flex; align-items: flex-start; margin-top: 36px; line-height: 40px; }
.qnum { width: 60px; }
.qtext { flex: 1; }
.pill {
  width: 154px; height: 46px; margin-right: 118px; border: 2px solid #e1e1e1; border-radius: 23px;
  font-size: 24px; line-height: 44px; text-align: center;
}
.options { display: flex; flex-direction: column; gap: 36px; margin-top: 33px; }
.option { display: flex; align-items: center; height: 40px; padding-left: 58px; line-height: 40px; }
.radio { width: 40px; height: 40px; border: 4px solid #bdbdbd; border-radius: 50%; margin-right: 20px; }
.rule-b { margin-top: 50px; }
.honor { display: flex; align-items: flex-start; margin-top: 60px; }
.check { width: 37px; height: 36px; border: 2px solid #6b6b6b; background: #f5f5f5; margin: 1px 20px 0 -1px; flex: none; }
.honor-body { flex: 1; }
.honor-text { width: 1340px; line-height: 42px; }
.honor-link { display: block; margin-top: 10px; line-height: 42px; color: #2f72d0; }
.name-input {
  margin-top: 21px; width: 599px; height: 78px; border: 2px solid #d0d0d0;
  padding-left: 32px; line-height: 76px; color: #8a8a8a;
}
.feedback { display: flex; margin: 8px 64px 0 0; }
.fb { height: 41px; }
.fb-up { width: 38px; }
.fb-down { width: 38px; margin-left: 40px; }
.fb-flag { width: 28px; margin-left: 39px; }
.actions { display: flex; justify-content: flex-end; gap: 37px; margin-top: 94px; }
.btn { height: 97px; border-radius: 4px; font-size: 32px; font-weight: 600; font-family: "Open Sans", sans-serif; }
.btn-save { width: 203px; border: 2px solid #2a6fc9; color: #2a6fc9; background: #fff; }
.btn-submit { width: 242px; background: #bdbdbd; color: #eeeeee; }

/* downloads */
.shelf {
  height: 97px;
  flex: none;
  background: #35363a;
  border-top: 2px solid #2a2b2e;
  border-bottom: 2px solid #5e5f62;
  border-radius: 0 0 10px 10px;
  display: flex;
  align-items: center;
  padding: 0 27px 0 6px;
  color: #f0f0f1;
  font: 400 25px Inter, "Liberation Sans", sans-serif;
}
.dl {
  width: 454px;
  height: 72px;
  display: flex;
  align-items: center;
  padding: 0 0 0 39px;
  border-right: 2px solid #66676b;
  position: relative;
}
.dl-ico { width: 22px; height: 30px; margin-top: -14px; }
.dl-name { margin-left: 31px; flex: 1; letter-spacing: -.6px; margin-top: 8px; }
.dl-name-txt { letter-spacing: -.3px; }
.dl-chev { width: 20px; height: 12px; margin-right: 34px; margin-top: -6px; }
.showall {
  margin-left: auto;
  width: 163px;
  height: 63px;
  border-radius: 8px;
  background: #2a2b2e;
  color: #f4f4f5;
  font: 500 25px Inter, sans-serif;
  letter-spacing: -.4px;
}
.shelf-x { width: 20px; height: 20px; margin-left: 25px; }

/* desktop + dock */
.desktop { height: 97px; flex: none; display: flex; }
.wall { width: 190px; background: #060912; flex: none; }
.dock {
  width: 2500px;
  flex: none;
  display: flex;
  padding-left: 3px;
  border: 2px solid #3d3f45;
  border-bottom: 0;
  border-radius: 14px 14px 0 0;
  background: linear-gradient(to right, #161a26 0%, #171a25 45%, #222325 60%, #252627 100%);
}
.di { width: 78px; height: 95px; flex: none; position: relative; margin-top: -2px; }
.di svg { width: 78px; height: 84px; overflow: visible; margin-top: 2px; }
.dot {
  position: absolute; left: 35px; top: 85px;
  width: 8px; height: 8px; border-radius: 50%; background: #9a9da3;
}
.dock-sep { width: 36px; flex: none; position: relative; }
.dock-sep::before { content: ""; position: absolute; left: 17px; top: 36px; width: 2px; height: 48px; background: #5b5c60; }
.dock-sep-b::before { top: 24px; height: 72px; }
.side { flex: 1; display: flex; flex-direction: column; }
.side-top { height: 40px; background: #0b0b0c; }
.side-panel { height: 45px; background: #1f2022; border-top: 1px solid #2c2d30; position: relative; }
.slider { position: absolute; left: 141px; top: 17px; width: 50px; height: 8px; background: #6a6b6d; border-radius: 4px; }
.slider b { position: absolute; right: 0; top: -6px; width: 20px; height: 20px; border-radius: 50%; background: #b6b7b9; }
.side-wall { flex: 1; background: #0a0f24; }

.tx-apr { font: 400 12px Inter, sans-serif; fill: #fff; }
.tx-23 { font: 300 34px Inter, sans-serif; fill: #222; }
.tx-3d { font: 400 11px Inter, sans-serif; fill: #555; }
.tx-badge { font: 400 18px Inter, sans-serif; fill: #fff; }
.tx-pages { font: 400 7.500px Inter, sans-serif; fill: #fff; }
.tx-zalo { font: 600 24px Inter, sans-serif; fill: #2368e8; }
.tx-linei { font: 800 14px Inter, sans-serif; fill: #55bc36; }
.tx-x { font: 700 22px Inter, sans-serif; fill: #fff; }
.tx-csv { font: 400 8px Inter, sans-serif; fill: #888; }
```
